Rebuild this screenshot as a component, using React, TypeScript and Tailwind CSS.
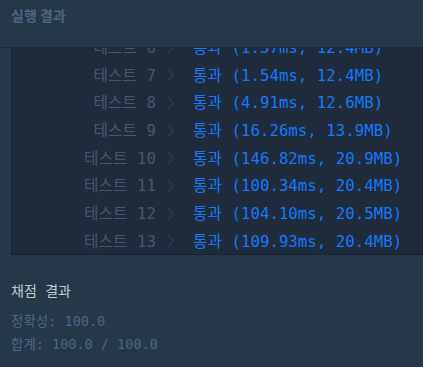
import * as React from "react";

type TestResult = {
    no: number;
    time: string;
    memory: string;
};

const results: TestResult[] = [
    {no: 6, time: "1.57ms", memory: "12.4MB"},
    {no: 7, time: "1.54ms", memory: "12.4MB"},
    {no: 8, time: "4.91ms", memory: "12.6MB"},
    {no: 9, time: "16.26ms", memory: "13.9MB"},
    {no: 10, time: "146.82ms", memory: "20.9MB"},
    {no: 11, time: "100.34ms", memory: "20.4MB"},
    {no: 12, time: "104.10ms", memory: "20.5MB"},
    {no: 13, time: "109.93ms", memory: "20.4MB"},
];

const mono = "font-['DejaVu_Sans_Mono','Noto_Sans_CJK_KR',monospace]";

const Chevron: React.FC = () => (
    <svg width="7" height="14" viewBox="0 0 7 14" fill="none" className="shrink-0">
        <path d="M1 1 L6 7 L1 13" stroke="#34465b" strokeWidth="1" />
    </svg>
);

const App: React.FC = () => {
    return (
        <div className="w-[423px] h-[367px] bg-[#263747] overflow-hidden">
            <div className="h-[48px] border-b border-[#1b2838] px-[11px] pt-[4px]">
                <h2 className="font-['Noto_Sans_CJK_KR',sans-serif] text-[14px] font-bold text-[#4d6680] leading-[22px]">
                    실행 결과
                </h2>
            </div>

            <div className="ml-[11px] h-[207px] bg-[#1f2a3b] border-l border-b border-[#172232] overflow-hidden">
                <div className={`-mt-[14px] ${mono} text-[15.75px]`}>
                    {results.map((r) => (
                        <div key={r.no} className="flex items-center h-[27.67px] whitespace-pre">
                            <span className="w-[144px] text-right text-[#44576c]">테스트 {r.no}</span>
                            <span className="ml-[11px] mr-[19px] flex items-center">
                                <Chevron />
                            </span>
                            <span className="text-[#1479fa]">
                                통과 ({r.time}, {r.memory})
                            </span>
                        </div>
                    ))}
                </div>
            </div>

            <div className={`px-[11px] pt-[24px] ${mono}`}>
                <h3 className="text-[14px] text-[#c2cbd4] leading-[24px]">채점 결과</h3>
                <div className="mt-[7px] text-[13.5px] text-[#4a6784] leading-[23px] whitespace-pre">
                    <div>정확성: 100.0</div>
                    <div>합계: 100.0 / 100.0</div>
                </div>
            </div>
        </div>
    );
};

export default App;
